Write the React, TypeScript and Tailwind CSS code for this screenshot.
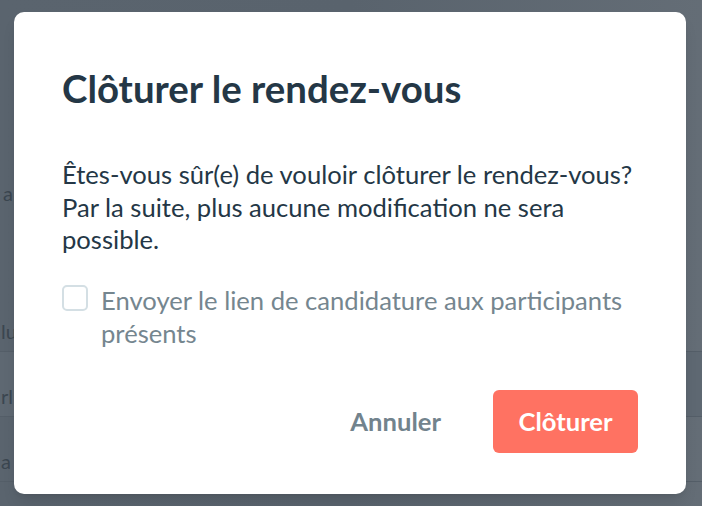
import type React from "react"

const App: React.FC = () => {
  const rows = [
    { text: "lu", tone: "" },
    { text: "rl", tone: "bg-[#5e6872]" },
    { text: "a", tone: "" },
  ]

  return (
    <div className="relative w-[702px] h-[506px] overflow-hidden bg-gradient-to-r from-[#5a646e] via-[#59636d] to-[#646d76] font-['Lato',sans-serif]">
      {/* page behind the dialog */}
      <div className="flex flex-col">
        <div className="h-[287px] pt-[181px] pl-[3px] text-[20px] leading-[24px] text-[#3b4650]">a</div>
        {rows.map((row, i) => (
          <div
            key={i}
            className={`h-[65px] flex items-end pb-[8px] pl-[1px] border-b border-[#545e68] text-[20px] leading-[24px] text-[#3b4650] ${row.tone}`}
          >
            <span>{row.text}</span>
          </div>
        ))}
      </div>

      {/* dialog */}
      <div className="absolute left-[14px] top-[12px] w-[672px] h-[482px] rounded-[10px] bg-white px-[48px] pt-[53px] pb-[41px] flex flex-col shadow-lg">
        <h2 className="text-[38.4px] leading-[46px] font-bold text-[#243746]">Clôturer le rendez-vous</h2>

        <p className="mt-[47px] text-[25.6px] leading-[32.5px] text-[#243746]">
          Êtes-vous sûr(e) de vouloir clôturer le rendez-vous? Par la suite, plus aucune modification ne sera
          possible.
        </p>

        <label className="mt-[28.5px] flex items-start gap-[13px]">
          <span className="mt-[1px] w-[26px] h-[26px] shrink-0 rounded-[5px] border-2 border-[#d4dfe4] bg-white" />
          <span className="text-[25.6px] leading-[32.5px] text-[#75868f]">
            Envoyer le lien de candidature aux participants présents
          </span>
        </label>

        <div className="mt-auto flex justify-end items-center gap-[26px]">
          <button className="h-[63px] px-[26px] text-[25.6px] font-bold text-[#72838d]">Annuler</button>
          <button className="h-[63px] w-[145px] rounded-[6px] bg-[#ff7262] text-[25.6px] font-bold text-white">
            Clôturer
          </button>
        </div>
      </div>
    </div>
  )
}

export default App
